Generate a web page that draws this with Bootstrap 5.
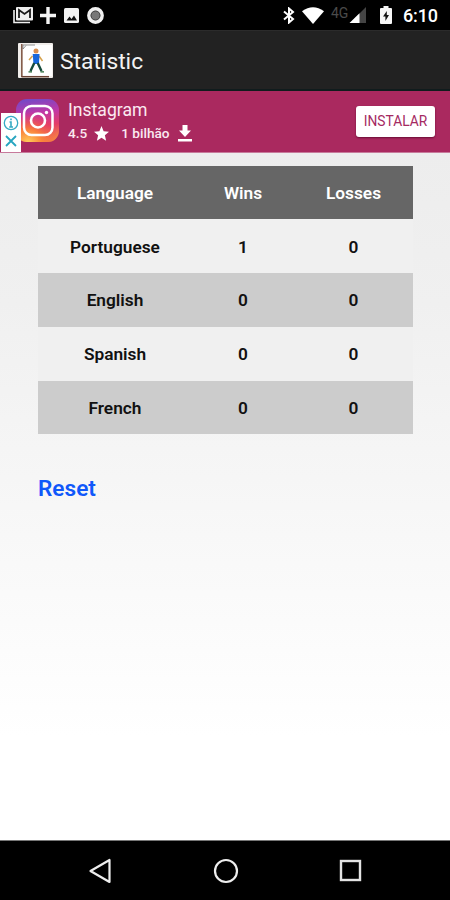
<!DOCTYPE html>
<html lang="en">
<head>
<meta charset="utf-8">
<meta name="viewport" content="width=device-width, initial-scale=1">
<title>Statistic</title>
<link href="https://cdn.jsdelivr.net/npm/bootstrap@5.3.0/dist/css/bootstrap.min.css" rel="stylesheet">
<style>
body{font-family:Roboto,"Liberation Sans",sans-serif;background:#000;}
svg{display:block;flex:none;}
.screen{width:450px;height:900px;overflow:hidden;}
.status{height:30px;padding:0 12px 0 13px;}
.status .g4{font-size:14px;color:#4b4b4b;line-height:15px;margin:-4px 0 0 7px;width:18px;}
.clock{font-size:18px;font-weight:500;width:36px;margin-left:10px;line-height:30px;padding-top:2px;letter-spacing:-.1px;}
.title-bar{height:61px;background:#222;border-top:1px solid #2b2b2b;border-bottom:2px solid #101c1d;padding-left:18px;gap:8px;}
.title-bar h1{font-size:22.8px;line-height:28px;color:#f3f3f3;font-weight:400;padding-top:4px;margin-left:-1px!important;}
.ad{height:62px;background:#aa295f;border-bottom:1px solid #c77a9b;padding:0 15px 0 15px;}
.ad-choices{left:1px;top:22px;width:20px;height:39px;background:#fff;padding:2px 1px 0;gap:1px;}
.ad-copy{margin-left:8px;color:#fbe9f1;}
.ad-name{font-size:17.6px;line-height:22px;}
.ad-meta{font-size:13.6px;line-height:18px;margin-top:3px;font-weight:500;}
.install{--bs-btn-bg:#fff;--bs-btn-color:#a52a62;--bs-btn-border-width:0;--bs-btn-border-radius:3px;font-size:13.8px;line-height:16px;width:79px;height:31px;padding:0 0 2px;box-shadow:0 1px 2px rgba(80,0,35,.7);}
.content{background:linear-gradient(#ededed,#f0f0f0 22%,#fff 85%);padding:12.5px 37px 0 38px;}
.scores{table-layout:fixed;width:375px;font-size:17.3px;font-weight:600;text-align:center;--bs-table-bg:transparent;}
.scores th,.scores td{height:53.75px;padding:1px 0 0;line-height:22px;font-weight:600;color:#111;border:0;vertical-align:middle;}
.scores thead th{background:#666;color:#fff;}
.scores tbody tr:nth-child(odd) td{background:#f0f0f0;}
.scores tbody tr:nth-child(even) td{background:#ccc;}
.reset{font-size:22.6px;line-height:28px;font-weight:600;color:#1058fa;margin-top:41px;}
.nav-keys{height:60px;border-top:1px solid #777;padding:0 88px 0 88px;}
</style>
</head>
<body>
<div class="screen d-flex flex-column">
  <div class="status d-flex align-items-center text-white">
    <svg width="20" height="17" viewBox="0 0 20 17"><path d="M1 3V15.5H17" fill="none" stroke="#eee" stroke-width="1.6"/><rect x="3" width="17" height="13.5" rx="1" fill="#eee"/><path d="M6 11V3L11.5 7L17 3V11" fill="none" stroke="#181818" stroke-width="1.8"/></svg>
    <svg width="16" height="17" viewBox="0 0 16 17" style="margin-left:7px"><path d="M8 0V17M0 8.5H16" stroke="#f4f4f4" stroke-width="3.4"/></svg>
    <svg class="ms-2" width="15" height="15" viewBox="0 0 15 15"><rect width="15" height="15" rx="1.5" fill="#f2f2f2"/><path d="M2.5 12.5L5.5 8.5L7.5 11L10 7.5L13 12.5Z" fill="#111"/></svg>
    <svg class="ms-2" width="17" height="17" viewBox="0 0 17 17"><circle cx="8.5" cy="8.5" r="6.6" fill="#777" stroke="#f0f0f0" stroke-width="3.6"/><circle cx="8.5" cy="8.5" r="4.5" fill="none" stroke="#444" stroke-width="1"/></svg>
    <svg class="ms-auto" width="12" height="17" viewBox="0 0 12 17"><path d="M1 4.5L10 12L6 15.5V1.5L10 5L1 12.5" fill="none" stroke="#fff" stroke-width="2"/></svg>
    <svg width="22" height="17" viewBox="0 0 22 17" style="margin-left:7px"><path d="M0 4.2Q11-3.6 22 4.2L11 17Z" fill="#fff"/></svg>
    <span class="g4">4G</span>
    <svg width="17" height="16" viewBox="0 0 17 16"><path d="M17 0V16H1Z" fill="#444"/><path d="M10.5 6.3V16H.5Z" fill="#fff"/></svg>
    <svg width="12" height="18" viewBox="0 0 12 18" style="margin-left:14px"><path d="M3.5 0H8.5V2H11Q12 2 12 3V17Q12 18 11 18H1Q0 18 0 17V3Q0 2 1 2H3.5Z" fill="#f7f7f7"/><path d="M6.8 5L3 10.5H5.4V15L9 9H6.8Z" fill="#111"/></svg>
    <span class="clock text-end">6:10</span>
  </div>

  <header class="title-bar d-flex align-items-center">
    <svg width="35" height="35" viewBox="0 0 35 35"><rect width="35" height="35" rx="1" fill="#f1eeeb"/><rect x="5" y="2" width="29" height="31" fill="#fff"/><path d="M3.8 1V34" stroke="#855d4c" stroke-width="1.6"/><path d="M3.5 33.7H31" stroke="#694334" stroke-width="1.5"/><path d="M5 6V2H17M5 6L8 2.5" fill="none" stroke="#777" stroke-width=".8"/><path d="M14.5 13L11 17M21 13L24.5 18" stroke="#d6a24d" stroke-width="1.5"/><circle cx="18" cy="8" r="2.5" fill="#d98e4f"/><path d="M14.7 11H21.5L21 21H15.5Z" fill="#1767dc"/><path d="M16.3 20L12.5 28M19.7 20L23.5 28" stroke="#174b3c" stroke-width="2.4"/><path d="M10.5 28.8H14M22.5 28.8H26" stroke="#263" stroke-width="1.3"/></svg>
    <h1 class="m-0">Statistic</h1>
  </header>

  <section class="ad d-flex position-relative">
    <svg width="45" height="45" viewBox="0 0 45 45" style="margin-top:7px">
      <defs>
        <linearGradient id="igBase" x1=".35" y1="0" x2=".5" y2="1"><stop offset="0" stop-color="#7548c7"/><stop offset=".35" stop-color="#c238a5"/><stop offset=".65" stop-color="#e43d68"/><stop offset="1" stop-color="#f8903e"/></linearGradient>
        <radialGradient id="igWarm" cx=".28" cy="1.02" r=".72"><stop offset="0" stop-color="#ffd15c"/><stop offset=".45" stop-color="#fb8538" stop-opacity=".9"/><stop offset="1" stop-color="#e93a5d" stop-opacity="0"/></radialGradient>
      </defs>
      <rect x="1" y="1" width="43" height="43" rx="11" fill="url(#igBase)"/><rect x="1" y="1" width="43" height="43" rx="11" fill="url(#igWarm)"/>
      <rect x="9" y="8" width="28.5" height="29" rx="7.5" fill="none" stroke="#fff" stroke-width="2.5"/><circle cx="23" cy="22.5" r="7" fill="none" stroke="#fff" stroke-width="2.6"/><circle cx="31.5" cy="14.5" r="1.7" fill="#fff"/>
    </svg>
    <div class="ad-choices position-absolute d-flex flex-column align-items-center">
      <svg width="16" height="16" viewBox="0 0 16 16"><circle cx="8" cy="8" r="6.7" fill="none" stroke="#35aac4" stroke-width="1.3"/><path d="M8 3.5V5.3M6.5 7H8V12M6.2 12H10" fill="none" stroke="#35aac4" stroke-width="1.6"/></svg>
      <svg width="16" height="18" viewBox="0 0 16 18"><path d="M3 4L13 14M13 4L3 14" stroke="#27a5c0" stroke-width="1.8"/></svg>
    </div>
    <div class="ad-copy">
      <div class="ad-name pt-2">Instagram</div>
      <div class="ad-meta d-flex align-items-center">
        <span>4.5</span>
        <svg width="15" height="15" viewBox="0 0 24 24" style="margin-left:7px"><path fill="#fff" d="M12 0L15.4 8.2L24 9L17.4 14.8L19.4 23.5L12 18.8L4.6 23.5L6.6 14.8L0 9L8.6 8.2Z"/></svg>
        <span style="margin-left:12px">1 bilhão</span>
        <svg width="14" height="17" viewBox="0 0 14 17" style="margin-left:8px"><path fill="#fff" d="M4.5 0H9.5V5.5H13L7 12L1 5.5H4.5ZM0 14H14V16.5H0Z"/></svg>
      </div>
    </div>
    <button class="btn install ms-auto" style="margin-top:15px">INSTALAR</button>
  </section>

  <main class="content flex-grow-1">
    <table class="scores table m-0">
      <colgroup><col style="width:154px"><col style="width:102px"><col style="width:119px"></colgroup>
      <thead><tr><th>Language</th><th>Wins</th><th>Losses</th></tr></thead>
      <tbody>
        <tr><td>Portuguese</td><td>1</td><td>0</td></tr>
        <tr><td>English</td><td>0</td><td>0</td></tr>
        <tr><td>Spanish</td><td>0</td><td>0</td></tr>
        <tr><td>French</td><td>0</td><td>0</td></tr>
      </tbody>
    </table>
    <a href="#" class="reset d-inline-block text-decoration-none">Reset</a>
  </main>

  <nav class="nav-keys d-flex align-items-center justify-content-between">
    <svg width="24" height="26" viewBox="0 0 24 26"><path d="M21.5 2V24L2.5 13Z" fill="none" stroke="#eee" stroke-width="2.2" stroke-linejoin="round"/></svg>
    <svg width="26" height="26" viewBox="0 0 26 26"><circle cx="13" cy="13" r="11" fill="none" stroke="#eee" stroke-width="2.2"/></svg>
    <svg width="23" height="23" viewBox="0 0 23 23"><rect x="2" y="2" width="19" height="19" fill="none" stroke="#e4e4e4" stroke-width="2.4"/></svg>
  </nav>
</div>
<script src="https://cdn.jsdelivr.net/npm/bootstrap@5.3.0/dist/js/bootstrap.bundle.min.js"></script>
</body>
</html>
